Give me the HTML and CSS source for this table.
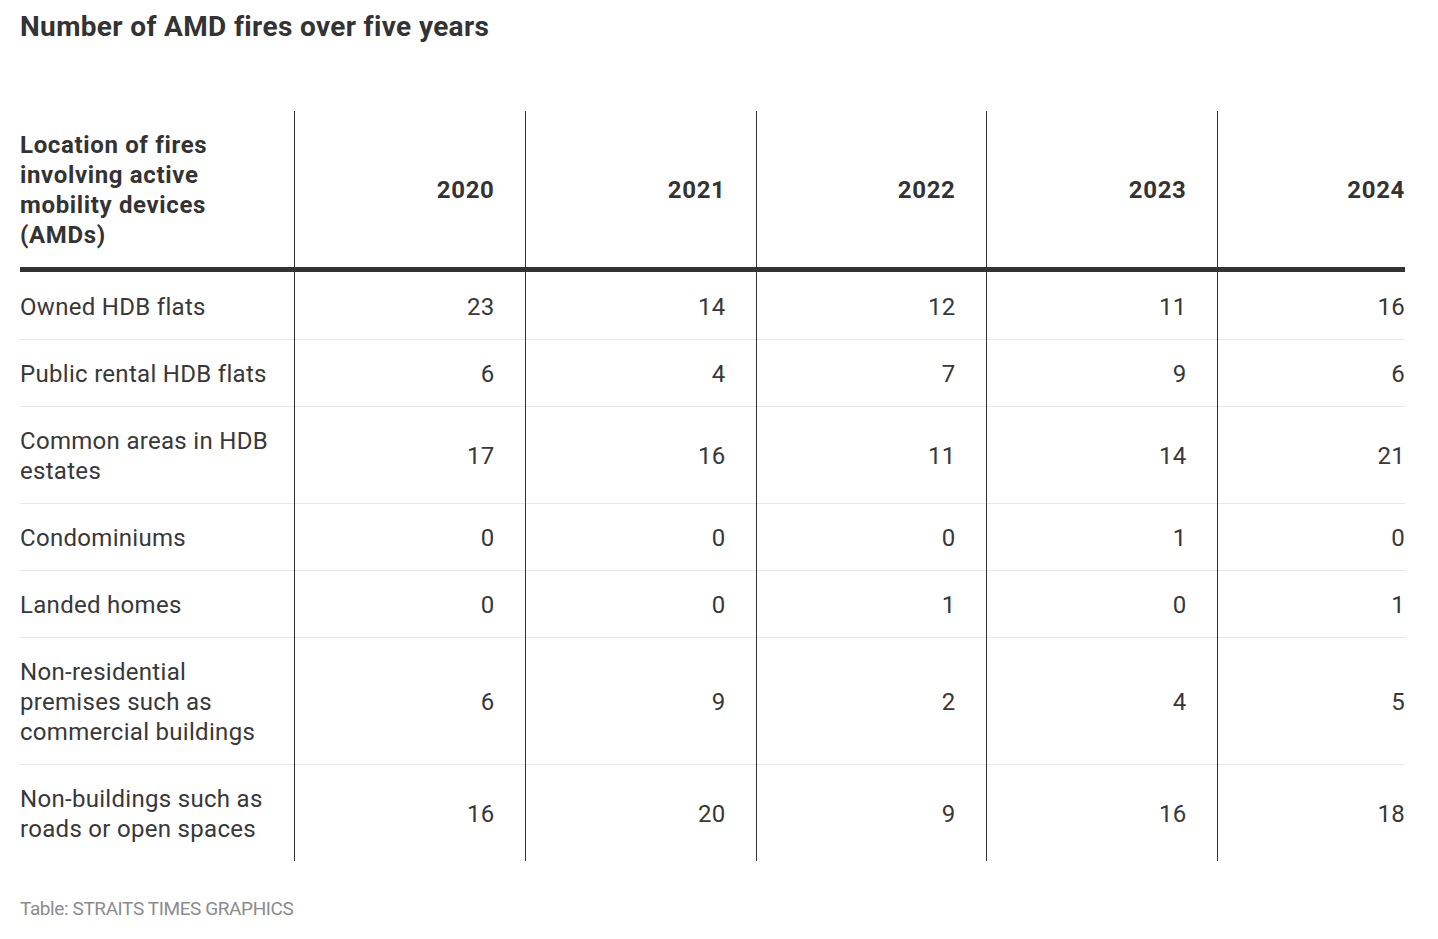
FILE: index.html
```html
<!DOCTYPE html>
<html lang="en">
<head>
<meta charset="utf-8">
<title>Number of AMD fires over five years</title>
<link rel="stylesheet" href="styles.css">
</head>
<body>
<main class="chart">
  <h1 class="title">Number of AMD fires over five years</h1>
  <table class="data">
    <colgroup>
      <col class="c-label">
      <col class="c-year">
      <col class="c-year">
      <col class="c-year-narrow">
      <col class="c-year">
      <col class="c-last">
    </colgroup>
    <thead>
      <tr>
        <th class="label">Location of fires involving active mobility devices (AMDs)</th>
        <th class="num">2020</th>
        <th class="num">2021</th>
        <th class="num">2022</th>
        <th class="num">2023</th>
        <th class="num">2024</th>
      </tr>
    </thead>
    <tbody>
      <tr><td class="label">Owned HDB flats</td><td class="num">23</td><td class="num">14</td><td class="num">12</td><td class="num">11</td><td class="num">16</td></tr>
      <tr><td class="label">Public rental HDB flats</td><td class="num">6</td><td class="num">4</td><td class="num">7</td><td class="num">9</td><td class="num">6</td></tr>
      <tr><td class="label">Common areas in HDB estates</td><td class="num">17</td><td class="num">16</td><td class="num">11</td><td class="num">14</td><td class="num">21</td></tr>
      <tr><td class="label">Condominiums</td><td class="num">0</td><td class="num">0</td><td class="num">0</td><td class="num">1</td><td class="num">0</td></tr>
      <tr><td class="label">Landed homes</td><td class="num">0</td><td class="num">0</td><td class="num">1</td><td class="num">0</td><td class="num">1</td></tr>
      <tr><td class="label">Non-residential premises such as commercial buildings</td><td class="num">6</td><td class="num">9</td><td class="num">2</td><td class="num">4</td><td class="num">5</td></tr>
      <tr><td class="label">Non-buildings such as roads or open spaces</td><td class="num">16</td><td class="num">20</td><td class="num">9</td><td class="num">16</td><td class="num">18</td></tr>
    </tbody>
  </table>
  <p class="source">Table: STRAITS TIMES GRAPHICS</p>
</main>
</body>
</html>
```
FILE: styles.css
```css
html, body {
  margin: 0;
  padding: 0;
  background: #ffffff;
}

.chart {
  padding: 8px 33px 0 20px;
  font-family: Roboto, "Liberation Sans", sans-serif;
  color: #333333;
}

.title {
  margin: 0;
  font-size: 28px;
  line-height: 38px;
  font-weight: 700;
  letter-spacing: 0.35px;
  color: #333333;
}

.data {
  margin-top: 65px;
  width: 1385px;
  border-collapse: collapse;
  table-layout: fixed;
}

.c-label { width: 274px; }
.c-year { width: 231px; }
.c-year-narrow { width: 230px; }
.c-last { width: 188px; }

.data th,
.data td {
  padding: 19px 30px 17px 0;
  font-size: 24px;
  line-height: 30px;
  border-right: 1px solid #333333;
  vertical-align: middle;
}

.data th:last-child,
.data td:last-child {
  border-right: none;
  padding-right: 0;
}

.data th {
  font-weight: 700;
  text-align: right;
  letter-spacing: 0.65px;
}

.data th.label {
  text-align: left;
  padding-right: 40px;
}

.data thead tr {
  border-bottom: 5px solid #333333;
}

.data td {
  font-weight: 400;
  text-align: right;
  letter-spacing: 0.3px;
  color: #383838;
}

.data td.label {
  text-align: left;
  padding-right: 24px;
}

.data tbody tr:first-child td {
  padding-top: 20px;
}

.data tbody tr {
  border-bottom: 1px solid #e8e8e8;
}

.data tbody tr:last-child {
  border-bottom: none;
}

.source {
  margin: 36px 0 0;
  font-size: 19px;
  line-height: 24px;
  letter-spacing: -0.4px;
  color: #8c8c8c;
}
```
